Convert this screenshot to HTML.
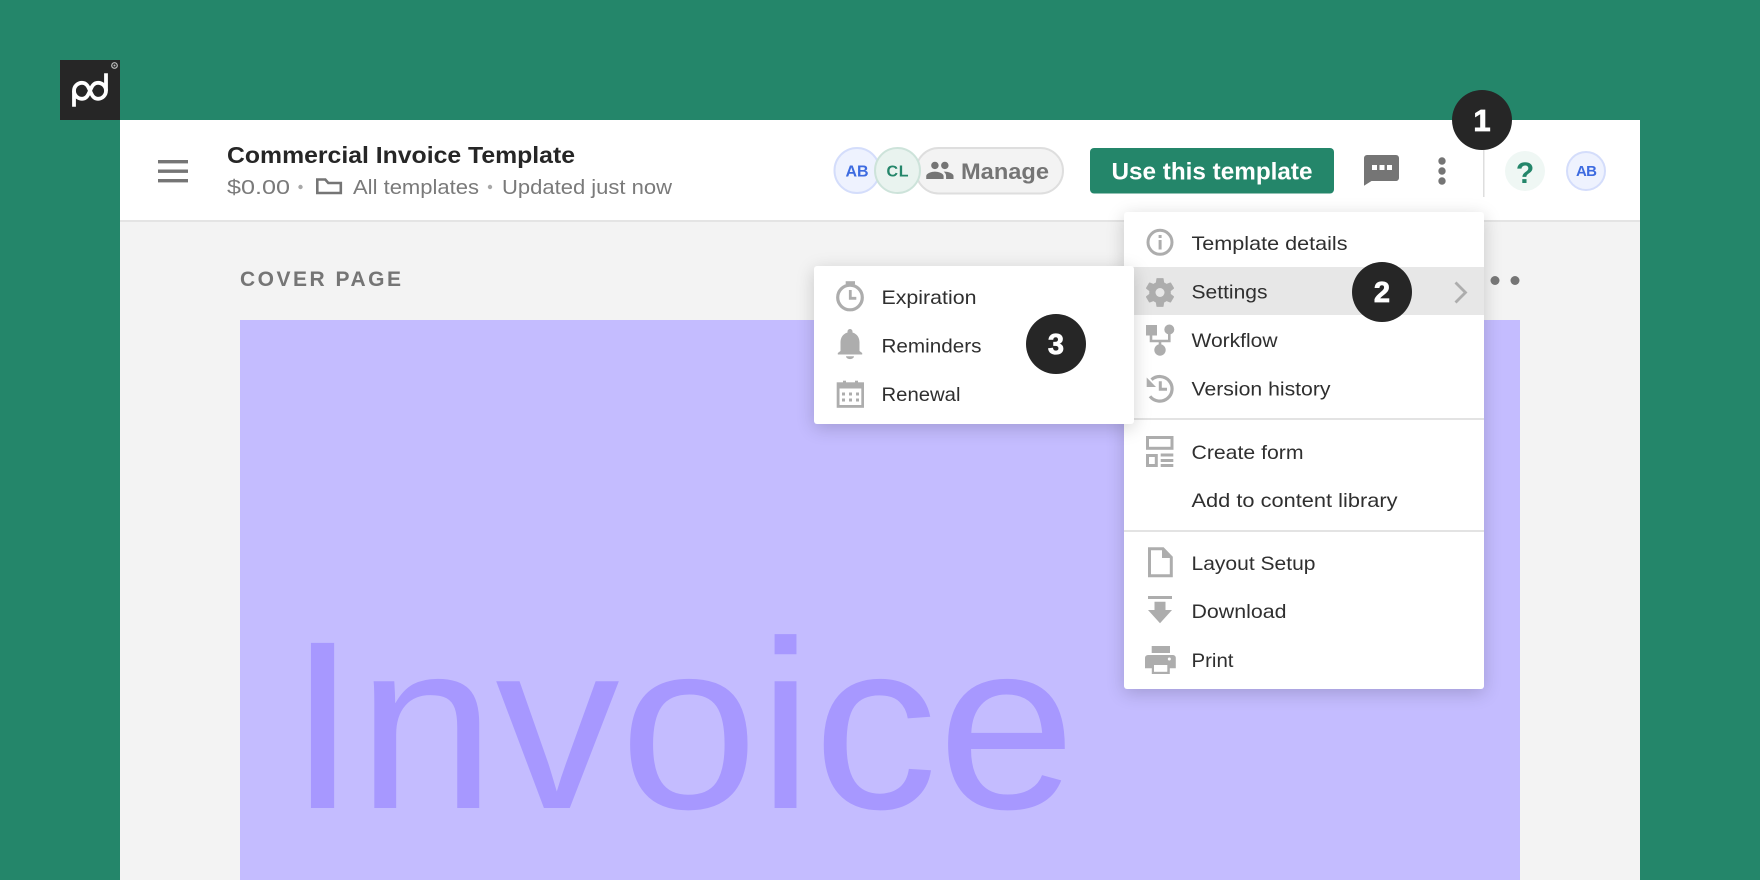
<!DOCTYPE html>
<html lang="en">
<head>
<meta charset="utf-8">
<title>Commercial Invoice Template</title>
<style>
html,body{margin:0;padding:0}
body{width:1760px;height:880px;overflow:hidden;background:#24866a;position:relative;font-family:"Liberation Sans",sans-serif}
.a{position:absolute}
#panel{left:120px;top:120px;width:1520px;height:760px;background:#f3f3f3}
#head{left:120px;top:120px;width:1520px;height:100px;background:#fff;border-bottom:2px solid #e4e4e4}
#page{left:240px;top:320px;width:1280px;height:560px;background:#c4bcff}
#inv{left:287.500px;top:605px;font-size:240px;line-height:240px;color:#a798ff;white-space:nowrap;height:240px;transform:scaleX(1.036);transform-origin:0 0}
#menu{left:1124px;top:212px;width:360px;height:477px;background:#fff;border-radius:3px;box-shadow:0 4px 18px rgba(0,0,0,.18)}
#row{left:1124px;top:267px;width:360px;height:48px;background:#e7e7e7}
.d{left:1124px;width:360px;height:2px;background:#e3e3e3}
#sub{left:814px;top:266px;width:320px;height:158px;background:#fff;border-radius:3px;box-shadow:0 4px 18px rgba(0,0,0,.18)}
#logo{left:60px;top:60px;width:60px;height:60px;background:#262626}
svg{position:absolute;left:0;top:0}
text{font-family:"Liberation Sans",sans-serif}
.m{font-size:19.500px;fill:#2f2f2f}
.s{font-size:20.500px;fill:#7a7a7a}
.i{fill:#adadad}
.o{fill:none;stroke:#adadad}
</style>
</head>
<body>
<div class="a" id="panel"></div>
<div class="a" id="head"></div>
<div class="a" id="page"></div>
<div class="a" id="inv">Invoice</div>
<div class="a" id="logo"></div>
<div class="a" id="menu"></div>
<div class="a" id="row"></div>
<div class="a d" style="top:418px"></div>
<div class="a d" style="top:530px"></div>
<div class="a" id="sub"></div>

<svg width="1760" height="880" viewBox="0 0 1760 880">
  <!-- logo -->
  <g fill="none" stroke="#fff" stroke-width="3.8">
    <path d="M74 106.8V90.8a8 8 0 0 1 8-8c4.5 0 6.2 3.8 8 8s3.5 8 8 8a8 8 0 0 0 8-8V73.3"/>
    <path d="M74 90.8a8 8 0 0 0 8 8c4.5 0 6.2-3.8 8-8s3.5-8 8-8a8 8 0 0 1 8 8"/>
  </g>
  <circle cx="114.5" cy="65.5" r="2.8" fill="#262626" stroke="#bbb" stroke-width="1.2"/>
  <circle cx="114.5" cy="65.5" r="1" fill="#bbb"/>

  <!-- hamburger -->
  <g fill="#757575">
    <rect x="158" y="160" width="30" height="3.4"/>
    <rect x="158" y="169.5" width="30" height="3.4"/>
    <rect x="158" y="179" width="30" height="3.4"/>
  </g>

  <!-- title -->
  <text x="227" y="163" font-size="23.5" font-weight="700" fill="#262626" textLength="348" lengthAdjust="spacingAndGlyphs">Commercial Invoice Template</text>
  <text class="s" x="227" y="194" textLength="63" lengthAdjust="spacingAndGlyphs">$0.00</text>
  <circle cx="300.5" cy="187" r="2.2" fill="#a8a8a8"/>
  <path d="M317.3 179.5h8l3 3.5h12.5v10h-23.5z" fill="none" stroke="#757575" stroke-width="2.6"/>
  <text class="s" x="353" y="194" textLength="126" lengthAdjust="spacingAndGlyphs">All templates</text>
  <circle cx="490" cy="187" r="2.2" fill="#a8a8a8"/>
  <text class="s" x="502" y="194" textLength="170" lengthAdjust="spacingAndGlyphs">Updated just now</text>
  <text x="240" y="286" font-size="21" font-weight="700" fill="#757575" textLength="161">COVER PAGE</text>

  <!-- manage pill & avatars -->
  <rect x="916" y="148" width="147" height="45.5" rx="22.7" fill="#f3f3f3" stroke="#dedede" stroke-width="2"/>
  <g transform="translate(925 155.5) scale(1.24)"><path fill="#757575" d="M16 11c1.66 0 2.99-1.34 2.99-3S17.66 5 16 5c-1.66 0-3 1.34-3 3s1.34 3 3 3zm-8 0c1.66 0 2.99-1.34 2.99-3S9.66 5 8 5C6.34 5 5 6.34 5 8s1.34 3 3 3zm0 2c-2.33 0-7 1.17-7 3.5V19h14v-2.5c0-2.33-4.67-3.5-7-3.5zm8 0c-.29 0-.62.02-.97.05 1.16.84 1.97 1.97 1.97 3.45V19h6v-2.5c0-2.33-4.67-3.5-7-3.5z"/></g>
  <text x="961" y="179" font-size="22" font-weight="700" fill="#757575" textLength="88" lengthAdjust="spacingAndGlyphs">Manage</text>
  <circle cx="857" cy="170.5" r="22.5" fill="#eef2fe" stroke="#d4ddfb" stroke-width="2"/>
  <text x="845.5" y="176.5" font-size="16" font-weight="700" fill="#3d6be0" textLength="23" lengthAdjust="spacing">AB</text>
  <circle cx="897.5" cy="170.5" r="22.5" fill="#e9f3ef" stroke="#cde3da" stroke-width="2"/>
  <text x="886.5" y="176.5" font-size="16" font-weight="700" fill="#24866a" textLength="22" lengthAdjust="spacing">CL</text>

  <!-- button -->
  <rect x="1090" y="148" width="244" height="45.5" rx="4" fill="#24866a"/>
  <text x="1111.5" y="179.3" font-size="23.8" font-weight="700" fill="#fff" textLength="201" lengthAdjust="spacingAndGlyphs">Use this template</text>

  <!-- chat -->
  <path fill="#757575" d="M1367 155h29a3 3 0 0 1 3 3v20a3 3 0 0 1-3 3h-24.500l-7.500 4.800v-27.800a3 3 0 0 1 3-3z"/>
  <rect x="1372" y="165" width="5" height="5" fill="#fff"/>
  <rect x="1379.5" y="165" width="5" height="5" fill="#fff"/>
  <rect x="1387" y="165" width="5" height="5" fill="#fff"/>

  <!-- kebab -->
  <circle cx="1442" cy="161" r="3.7" fill="#757575"/>
  <circle cx="1442" cy="171" r="3.7" fill="#757575"/>
  <circle cx="1442" cy="181" r="3.7" fill="#757575"/>

  <rect x="1483" y="140" width="1.5" height="57" fill="#dedede"/>

  <!-- help, avatar -->
  <circle cx="1525" cy="171" r="20" fill="#eff7f4"/>
  <text x="1525" y="183" font-size="30" font-weight="700" fill="#24866a" text-anchor="middle">?</text>
  <circle cx="1586" cy="171" r="19" fill="#eef2fe" stroke="#d4ddfb" stroke-width="2"/>
  <text x="1576" y="175.8" font-size="15" font-weight="700" fill="#3d6be0" textLength="21" lengthAdjust="spacing">AB</text>

  <!-- page dots -->
  <circle cx="1495" cy="280.5" r="4.5" fill="#757575"/>
  <circle cx="1515" cy="280.5" r="4.5" fill="#757575"/>

  <!-- menu text -->
  <text class="m" x="1191.500" y="250" textLength="156" lengthAdjust="spacingAndGlyphs">Template details</text>
  <text class="m" x="1191.500" y="298.5" textLength="76" lengthAdjust="spacingAndGlyphs">Settings</text>
  <text class="m" x="1191.500" y="347" textLength="86" lengthAdjust="spacingAndGlyphs">Workflow</text>
  <text class="m" x="1191.500" y="395.5" textLength="139" lengthAdjust="spacingAndGlyphs">Version history</text>
  <text class="m" x="1191.500" y="459" textLength="112" lengthAdjust="spacingAndGlyphs">Create form</text>
  <text class="m" x="1191.500" y="507" textLength="206" lengthAdjust="spacingAndGlyphs">Add to content library</text>
  <text class="m" x="1191.500" y="570" textLength="124" lengthAdjust="spacingAndGlyphs">Layout Setup</text>
  <text class="m" x="1191.500" y="618" textLength="95" lengthAdjust="spacingAndGlyphs">Download</text>
  <text class="m" x="1191.500" y="667" textLength="42" lengthAdjust="spacingAndGlyphs">Print</text>

  <text class="m" x="881.500" y="304" textLength="95" lengthAdjust="spacingAndGlyphs">Expiration</text>
  <text class="m" x="881.500" y="352.7" textLength="100" lengthAdjust="spacingAndGlyphs">Reminders</text>
  <text class="m" x="881.500" y="401" textLength="79" lengthAdjust="spacingAndGlyphs">Renewal</text>

  <!-- info -->
  <circle class="o" cx="1160" cy="242.3" r="12" stroke-width="3"/>
  <rect class="i" x="1158.600" y="235" width="3" height="3"/>
  <rect class="i" x="1158.600" y="240" width="3" height="9.500"/>

  <!-- gear -->
  <g transform="translate(1142 274.5) scale(1.5)"><path class="i" d="M19.14 12.94c.04-.3.06-.61.06-.94 0-.32-.02-.64-.07-.94l2.03-1.58c.18-.14.23-.41.12-.61l-1.92-3.32c-.12-.22-.37-.29-.59-.22l-2.39.96c-.5-.38-1.03-.7-1.62-.94l-.36-2.54c-.04-.24-.24-.41-.48-.41h-3.84c-.24 0-.43.17-.47.41l-.36 2.54c-.59.24-1.13.57-1.62.94l-2.39-.96c-.22-.08-.47 0-.59.22L2.74 8.87c-.12.21-.08.47.12.61l2.03 1.58c-.05.3-.09.63-.09.94s.02.64.07.94l-2.03 1.58c-.18.14-.23.41-.12.61l1.92 3.32c.12.22.37.29.59.22l2.39-.96c.5.38 1.03.7 1.62.94l.36 2.54c.05.24.24.41.48.41h3.84c.24 0 .44-.17.47-.41l.36-2.54c.59-.24 1.13-.56 1.62-.94l2.39.96c.22.08.47 0 .59-.22l1.92-3.32c.12-.22.07-.47-.12-.61l-2.01-1.58zM12 15.6c-1.98 0-3.6-1.62-3.6-3.6s1.62-3.6 3.6-3.6 3.6 1.62 3.6 3.6-1.62 3.6-3.6 3.6z"/></g>
  <circle class="i" cx="1160" cy="292.500" r="9.500"/>
  <circle cx="1160" cy="292.500" r="4.500" fill="#e7e7e7"/>

  <!-- workflow -->
  <rect class="i" x="1146" y="325" width="11" height="10.500"/>
  <circle class="i" cx="1169.3" cy="329.5" r="5"/>
  <path class="o" stroke-width="2.6" d="M1151 334v7h18.300V334M1160 341v5"/>
  <circle class="i" cx="1160" cy="350" r="5.700"/>

  <!-- history -->
  <path class="o" stroke-width="3.200" d="M1151.500 379.700A12.300 12.300 0 1 1 1150 396.300"/>
  <polygon class="i" points="1146.7,377.500 1146.7,387 1156,387"/>
  <path class="o" stroke-width="3" d="M1160.300 381.300v8h6.700"/>

  <!-- chevron -->
  <path class="o" stroke-width="2.800" d="M1455.500 282.500l10 10-10 10"/>

  <!-- create form -->
  <rect class="o" stroke-width="3" x="1147.500" y="437.500" width="24.500" height="10.800"/>
  <rect class="o" stroke-width="3" x="1147.500" y="455.500" width="8.800" height="10"/>
  <rect class="i" x="1160.7" y="453.500" width="12.600" height="3"/>
  <rect class="i" x="1160.7" y="459" width="12.600" height="3"/>
  <rect class="i" x="1160.7" y="464" width="12.600" height="3"/>

  <!-- layout -->
  <path class="o" stroke-width="3" d="M1149.500 548.800h13.500l8.300 8.500v18.500h-21.800z"/>
  <polygon class="i" points="1162,548 1162,558 1172,558"/>

  <!-- download -->
  <rect class="i" x="1148" y="596" width="24" height="3"/>
  <polygon class="i" points="1154.5,601.7 1165.5,601.7 1165.5,610 1172,610 1160,623.3 1148,610 1154.5,610"/>

  <!-- print -->
  <rect class="i" x="1151.7" y="646" width="18.3" height="7"/>
  <path class="i" d="M1148 655h25a2.800 2.800 0 0 1 2.800 2.800v10.500h-6v5.700h-18v-5.700h-6.800v-10.500a3 3 0 0 1 3-2.800z"/>
  <rect x="1154" y="665" width="13.3" height="6.8" fill="#fff"/>
  <circle cx="1169.3" cy="659" r="1.5" fill="#fff"/>

  <!-- stopwatch -->
  <rect class="i" x="845.7" y="281.2" width="9.3" height="3.2"/>
  <circle class="o" cx="850" cy="297.5" r="12.3" stroke-width="3.200"/>
  <path class="o" stroke-width="2.800" d="M850.3 290v8.300h6"/>

  <!-- bell -->
  <path class="i" d="M850 329a2.500 2.500 0 0 1 2.500 2.500v1c5 1.500 7 5.500 7 10v8.500l2.700 2v1.500h-24.400v-1.500l2.700-2v-8.500c0-4.500 2-8.500 7-10v-1a2.500 2.500 0 0 1 2.500-2.500z"/>
  <path class="i" d="M846 356.300h8a4 2.800 0 0 1-8 0z"/>

  <!-- calendar -->
  <rect class="i" x="836.7" y="382.3" width="27.3" height="25.5"/>
  <rect class="i" x="843" y="380.7" width="3" height="3"/>
  <rect class="i" x="855" y="380.7" width="3" height="3"/>
  <rect x="839.5" y="388.5" width="21.8" height="16.5" fill="#fff"/>
  <g class="i">
    <rect x="842" y="392.5" width="3" height="3"/><rect x="849" y="392.5" width="3" height="3"/><rect x="856" y="392.5" width="3" height="3"/>
    <rect x="842" y="398.5" width="3" height="3"/><rect x="849" y="398.5" width="3" height="3"/><rect x="856" y="398.5" width="3" height="3"/>
  </g>

  <!-- badges -->
  <circle cx="1482" cy="120" r="30" fill="#262626"/>
  <text x="1482" y="131" font-size="31" font-weight="700" fill="#fff" stroke="#fff" stroke-width=".8" text-anchor="middle">1</text>
  <circle cx="1382" cy="292" r="30" fill="#262626"/>
  <text x="1382" y="302" font-size="29" font-weight="700" fill="#fff" stroke="#fff" stroke-width=".8" text-anchor="middle">2</text>
  <circle cx="1056" cy="344" r="30" fill="#262626"/>
  <text x="1056" y="354" font-size="29" font-weight="700" fill="#fff" stroke="#fff" stroke-width=".8" text-anchor="middle">3</text>
</svg>
</body>
</html>
